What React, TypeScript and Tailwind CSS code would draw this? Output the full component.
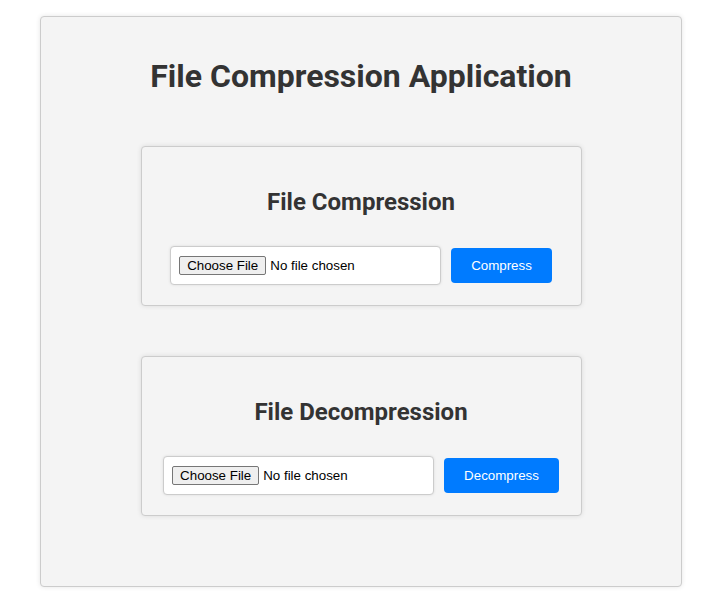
export default function App() {
  return (
    <div className="min-h-screen bg-white pt-[16px]" style={{ fontFamily: 'Roboto, sans-serif' }}>
      <div className="ml-[40px] w-[642px] rounded-[4px] border border-[#ccc] bg-[#f4f4f4] px-[20px] pb-[70px] pt-[20px] shadow-[0_0_5px_rgba(0,0,0,0.1)]">
        <h1 className="mt-[21px] text-center text-[32px] font-bold leading-[37px] text-[#333]">
          File Compression Application
        </h1>

        <div className="mx-auto mt-[51px] flex w-[441px] flex-col gap-[50px]">
          <Card title="File Compression" action="Compress" />
          <Card title="File Decompression" action="Decompress" />
        </div>
      </div>
    </div>
  );
}

function Card({ title, action }: { title: string; action: string }) {
  return (
    <div className="rounded-[4px] border border-[#ccc] bg-[#f4f4f4] p-[20px] shadow-[0_0_5px_rgba(0,0,0,0.1)]">
      <h2 className="mt-[21px] text-center text-[24px] font-bold leading-[28px] text-[#333]">{title}</h2>
      <div className="mt-[30px] flex items-center justify-center gap-[10px]">
        <input
          type="file"
          className="w-[271px] rounded-[4px] border border-[#ccc] bg-white p-[8px] text-[13.33px] leading-[21px] text-black shadow-[0_0_3px_rgba(0,0,0,0.1)] file:mr-[4px] file:rounded-[2px] file:border file:border-[#767676] file:bg-[#efefef] file:px-[7px] file:py-[1px] file:leading-[15px] file:text-black"
          style={{ fontFamily: '"Liberation Sans", Arial, sans-serif' }}
        />
        <button
          className="rounded-[4px] bg-[#007bff] px-[20px] py-[10px] text-[13.33px] leading-[15px] text-white"
          style={{ fontFamily: '"Liberation Sans", Arial, sans-serif' }}
        >
          {action}
        </button>
      </div>
    </div>
  );
}
